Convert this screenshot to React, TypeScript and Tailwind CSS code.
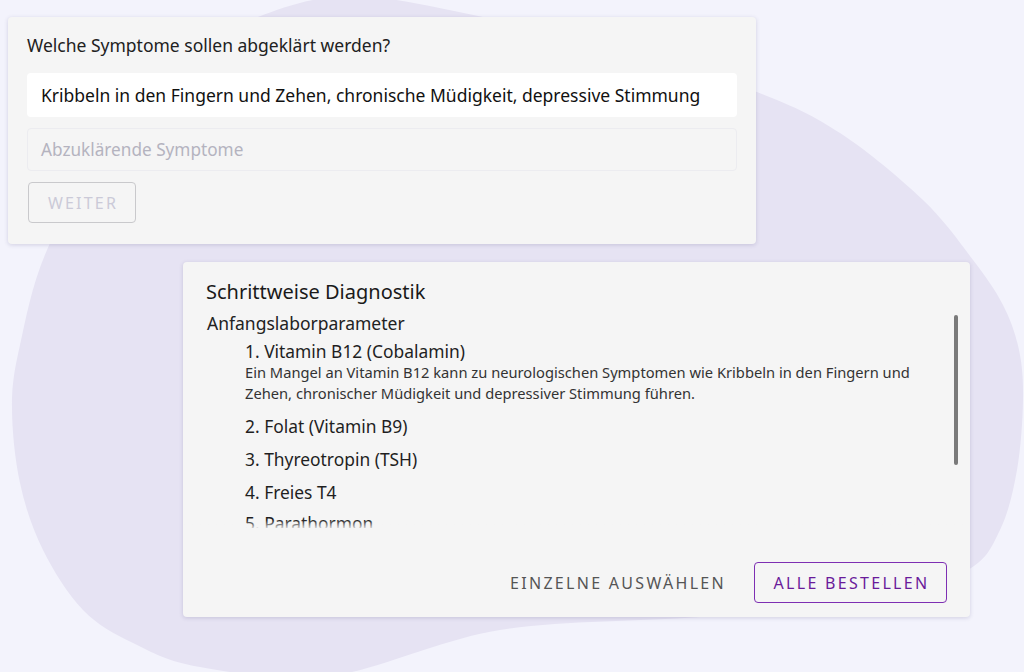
import React from "react";

const pts: [number, number][] = [
  [353, -4], [483, 17], [620, 48], [757, 92], [840, 133], [923, 200], [973, 260], [1003, 305],
  [1019, 350], [1023, 400], [1017, 470], [1000, 530], [968, 570], [880, 602], [700, 617],
  [500, 630], [330, 676], [200, 667], [133, 643], [83, 610], [43, 550], [20, 483], [12, 407],
  [20, 345], [47, 250], [110, 140], [190, 60], [258, 17],
];

function smoothPath(p: [number, number][]) {
  const n = p.length;
  let d = `M ${p[0][0]} ${p[0][1]}`;
  for (let i = 0; i < n; i++) {
    const p0 = p[(i - 1 + n) % n];
    const p1 = p[i];
    const p2 = p[(i + 1) % n];
    const p3 = p[(i + 2) % n];
    const c1x = p1[0] + (p2[0] - p0[0]) / 6;
    const c1y = p1[1] + (p2[1] - p0[1]) / 6;
    const c2x = p2[0] - (p3[0] - p1[0]) / 6;
    const c2y = p2[1] - (p3[1] - p1[1]) / 6;
    d += ` C ${c1x} ${c1y} ${c2x} ${c2y} ${p2[0]} ${p2[1]}`;
  }
  return d + " Z";
}

const blob = smoothPath(pts);

export default function App() {
  return (
    <div
      className="relative w-[1024px] h-[672px] overflow-hidden bg-[#f3f3fc]"
      style={{ fontFamily: '"Noto Sans", "Open Sans", sans-serif' }}
    >
      <svg className="absolute inset-0" width="1024" height="672" viewBox="0 0 1024 672">
        <path d={blob} fill="#e6e3f3" />
      </svg>

      <div className="relative flex flex-col">
        {/* Card 1 */}
        <div className="ml-[8px] mt-[17px] w-[748px] h-[227px] rounded-[4px] bg-[#f5f5f5] shadow-[0_1px_4px_rgba(60,50,110,0.18)] px-[19px] pt-[16px] flex flex-col">
          <div className="text-[17.5px] leading-[24px] text-[#212121]">Welche Symptome sollen abgeklärt werden?</div>
          <div className="mt-[16px] h-[44px] rounded-[4px] bg-white flex items-center px-[14px] text-[17.5px] text-[#111]">
            Kribbeln in den Fingern und Zehen, chronische Müdigkeit, depressive Stimmung
          </div>
          <div className="mt-[11px] h-[43px] rounded-[4px] border border-[#ececf0] bg-[#f5f5f5] flex items-center px-[13px] text-[17.2px] text-[#b4b3bf]">
            Abzuklärende Symptome
          </div>
          <div className="ml-[1px] mt-[11px] w-[108px] h-[41px] rounded-[4px] border border-[#c9c9cc] flex items-center justify-center pl-[2px] text-[16px] tracking-[2.2px] text-[#cbcad8]">
            WEITER
          </div>
        </div>

        {/* Card 2 */}
        <div className="ml-[183px] mt-[18px] w-[787px] h-[355px] rounded-[4px] bg-[#f5f5f5] shadow-[0_1px_4px_rgba(60,50,110,0.18)] flex flex-col">
          <div className="pl-[23px] pt-[16px] text-[20px] leading-[28px] text-[#1a1a1a]">Schrittweise Diagnostik</div>
          <div className="relative mt-[6px] h-[216px] overflow-hidden">
            <div className="pl-[24px] text-[17.5px] leading-[22px] text-[#222]">Anfangslaborparameter</div>
            <div className="pl-[62px] pr-[40px] flex flex-col text-[#1f1f1f]">
              <div className="mt-[6px] text-[17.4px] leading-[22px]">1. Vitamin B12 (Cobalamin)</div>
              <div className="text-[14.7px] leading-[21px] text-[#333]">
                Ein Mangel an Vitamin B12 kann zu neurologischen Symptomen wie Kribbeln in den Fingern und Zehen, chronischer Müdigkeit und depressiver Stimmung führen.
              </div>
              <div className="mt-[11px] text-[17.4px] leading-[22px]">2. Folat (Vitamin B9)</div>
              <div className="mt-[11px] text-[17.4px] leading-[22px]">3. Thyreotropin (TSH)</div>
              <div className="mt-[11px] text-[17.4px] leading-[22px]">4. Freies T4</div>
              <div className="mt-[9px] text-[17.4px] leading-[22px]">5. Parathormon</div>
            </div>
            <div className="absolute left-0 right-0 bottom-0 h-[8px] bg-gradient-to-b from-[#f5f5f5]/0 to-[#f5f5f5]/80" />
            <div className="absolute right-[12px] top-[3px] w-[4px] h-[150px] rounded-full bg-[#7a7a7a]" />
          </div>
          <div className="mt-auto mb-[14px] mr-[23px] flex items-center justify-end gap-[28px]">
            <div className="text-[16px] tracking-[2.3px] text-[#555]">EINZELNE AUSWÄHLEN</div>
            <div className="w-[193px] h-[41px] rounded-[4px] border border-[#7e2fb3] flex items-center justify-center pl-[2px] text-[16px] tracking-[2.3px] text-[#6a1b9a]">
              ALLE BESTELLEN
            </div>
          </div>
        </div>
      </div>
    </div>
  );
}
